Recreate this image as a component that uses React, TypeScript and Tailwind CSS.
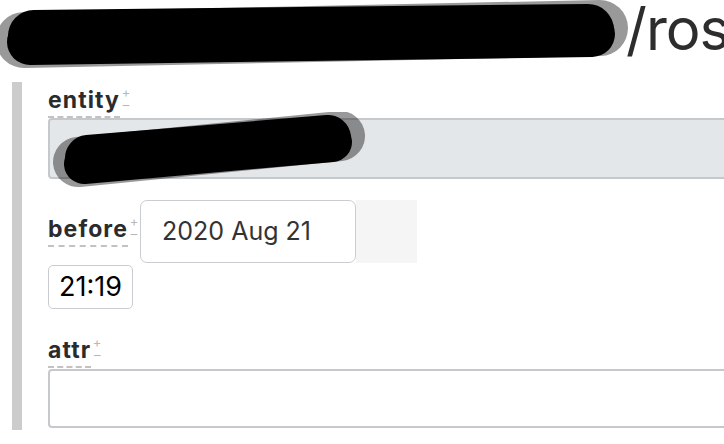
import React from "react";

function Marker() {
  return (
    <span className="flex h-[21px] w-[12px] flex-col items-center justify-between self-start text-[13px] leading-none text-[#b8b8b8]">
      <span className="-mt-[3px]">+</span>
      <span className="-mb-[1px]">–</span>
    </span>
  );
}

function Label({ text }: { text: string }) {
  return (
    <div className="flex items-start">
      <span className="border-b-2 border-dashed border-[#c2c2c2] pb-[4px] text-[23px] font-bold leading-none tracking-[1.1px] text-[#2b2b2b]">
        {text}
      </span>
      <Marker />
    </div>
  );
}

function Scribble({ className, x1, y1, x2, y2, w }: { className: string; x1: number; y1: number; x2: number; y2: number; w: number }) {
  return (
    <svg className={className} xmlns="http://www.w3.org/2000/svg">
      <line x1={x1 - 6} y1={y1 + 4} x2={x2 + 8} y2={y2 - 2} stroke="#000" strokeOpacity="0.4" strokeWidth={w + 4} strokeLinecap="round" />
      <line x1={x1} y1={y1 + 6} x2={x2} y2={y2 + 4} stroke="#000" strokeWidth={w - 6} strokeLinecap="round" />
      <line x1={x1 + 4} y1={y1} x2={x2 - 4} y2={y2} stroke="#000" strokeWidth={w} strokeLinecap="round" />
    </svg>
  );
}

export default function App() {
  return (
    <div className="relative h-[444px] w-[724px] overflow-hidden bg-white font-['Inter',sans-serif]">
      <div className="relative h-[82px] whitespace-nowrap pl-[626px] text-[58px] font-normal leading-none tracking-[-1px] text-[#2d2d2d]">
        /roster
        <Scribble className="absolute left-0 top-0 h-[82px] w-[650px]" x1={30} y1={36} x2={592} y2={30} w={52} />
      </div>

      <div className="flex">
        <div className="ml-[12px] h-[348px] w-[10px] shrink-0 bg-[#cccccc]" />
        <div className="flex flex-1 flex-col pl-[26px]">
          <div className="mt-[7px]">
            <Label text="entity" />
          </div>
          <div className="relative h-[61px] w-[700px] rounded-[4px] border-2 border-[#c5c9cc] bg-[#e4e7ea]">
            <Scribble className="absolute -left-[2px] -top-[8px] h-[80px] w-[330px]" x1={36} y1={46} x2={284} y2={26} w={46} />
          </div>

          <div className="mt-[21px] flex items-start">
            <div className="mt-[18px]">
              <Label text="before" />
            </div>
            <div className="flex h-[63px] w-[216px] items-center rounded-[7px] border-[1.5px] border-[#c9cdd1] bg-white pl-[21px] text-[25px] text-[#333]">
              2020 Aug 21
            </div>
            <div className="h-[63px] w-[61px] bg-[#f5f5f5]" />
          </div>

          <div className="mt-[2px] flex h-[44px] w-[85px] items-center justify-center rounded-[5px] border-[1.5px] border-[#c9cdd1] text-[27px] text-black">
            21:19
          </div>

          <div className="mt-[30px]">
            <Label text="attr" />
          </div>
          <div className="mt-[1px] h-[59px] w-[700px] rounded-[4px] border-2 border-[#c5c9cc] bg-white" />
        </div>
      </div>
    </div>
  );
}
